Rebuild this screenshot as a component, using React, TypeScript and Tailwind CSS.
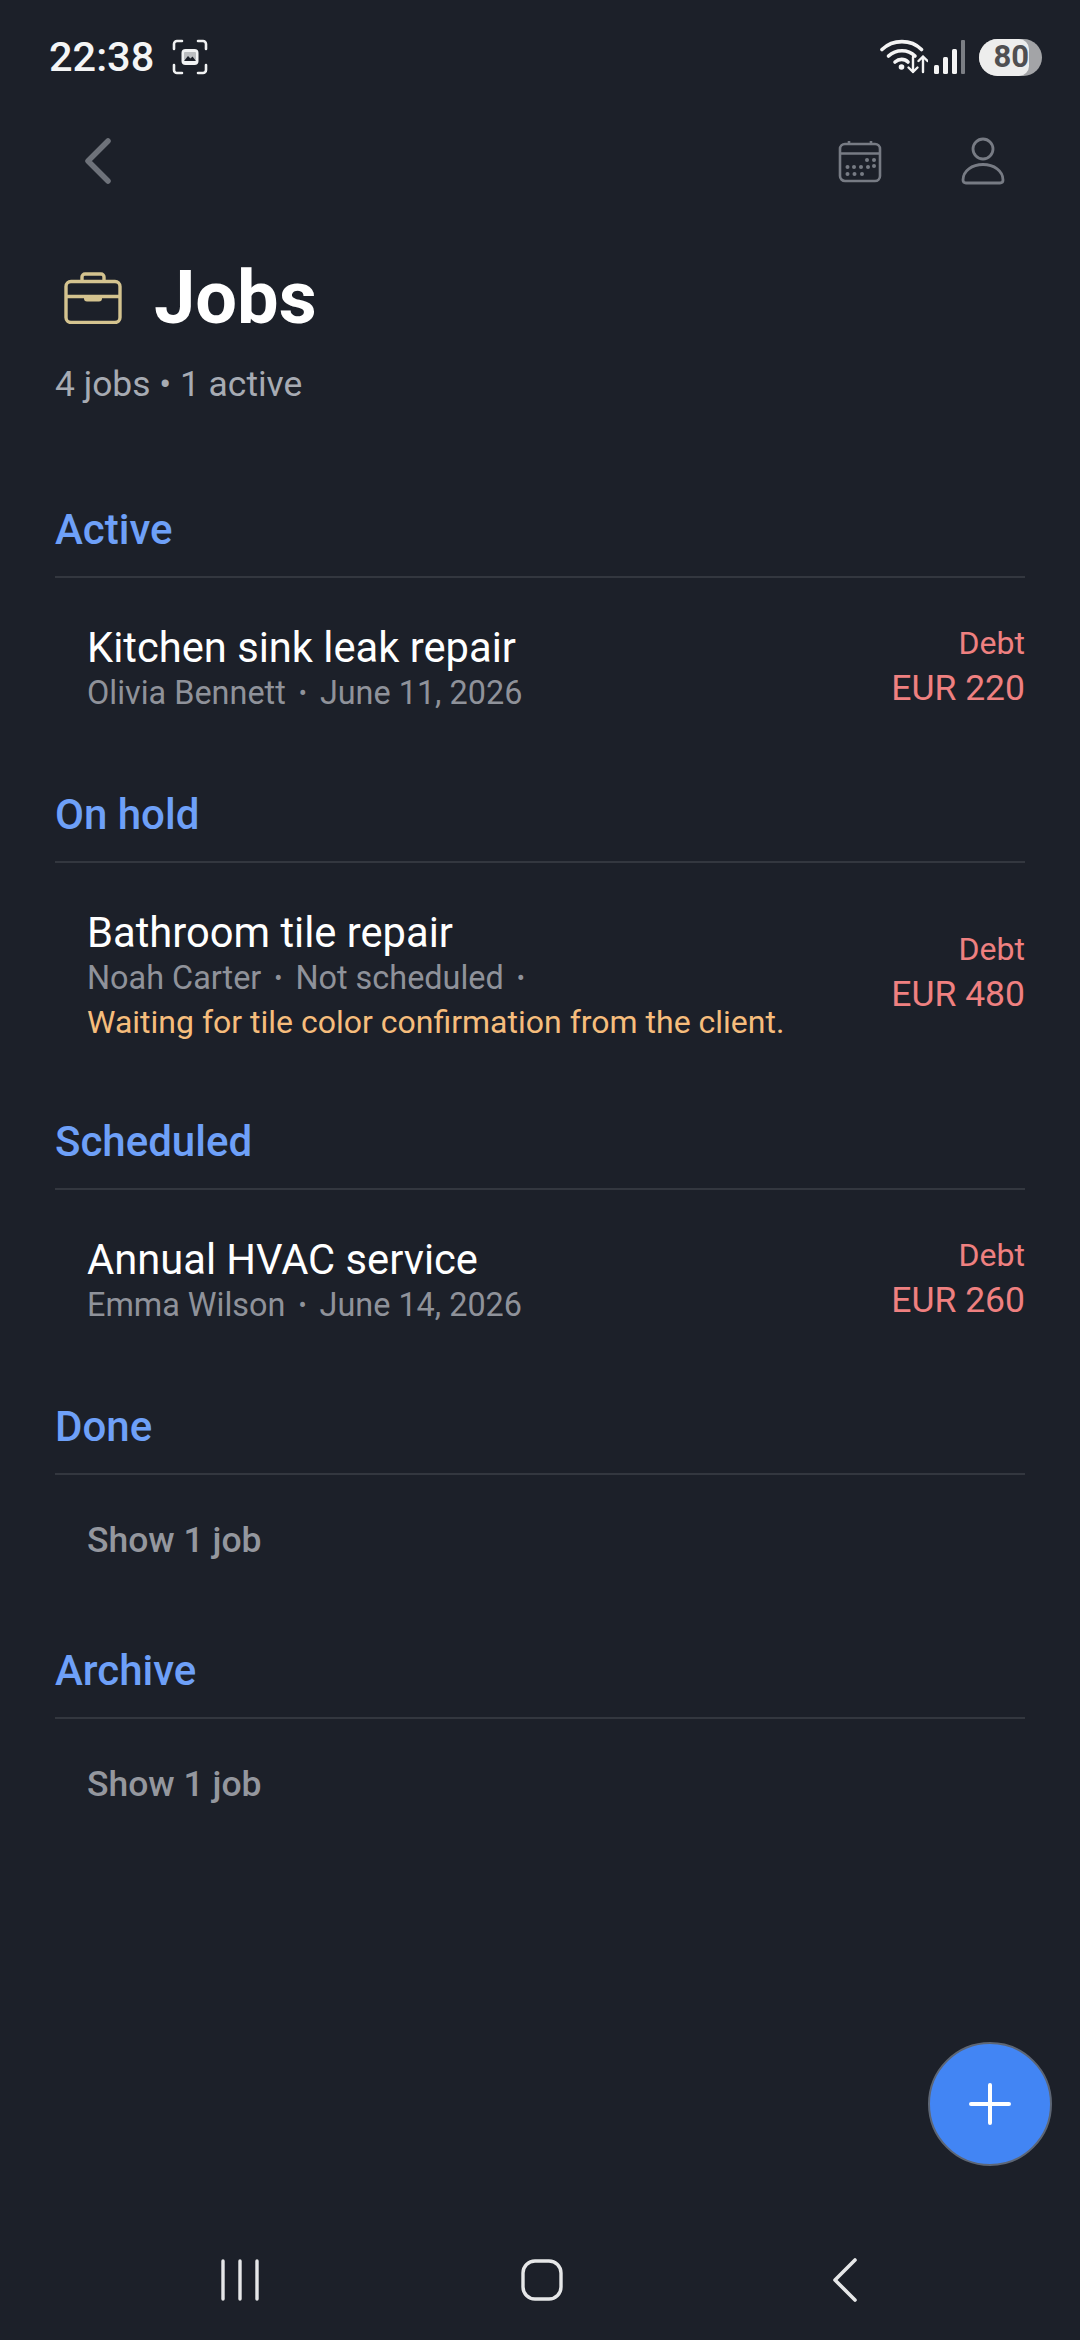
import React from "react";

interface Job {
  title: string;
  meta: string[];
  trailingDot?: boolean;
  note?: string;
  amount: string;
}

interface Section {
  name: string;
  job?: Job;
  collapsed?: string;
}

const sections: Section[] = [
  {
    name: "Active",
    job: {
      title: "Kitchen sink leak repair",
      meta: ["Olivia Bennett", "June 11, 2026"],
      amount: "EUR 220",
    },
  },
  {
    name: "On hold",
    job: {
      title: "Bathroom tile repair",
      meta: ["Noah Carter", "Not scheduled"],
      trailingDot: true,
      note: "Waiting for tile color confirmation from the client.",
      amount: "EUR 480",
    },
  },
  {
    name: "Scheduled",
    job: {
      title: "Annual HVAC service",
      meta: ["Emma Wilson", "June 14, 2026"],
      amount: "EUR 260",
    },
  },
  { name: "Done", collapsed: "Show 1 job" },
  { name: "Archive", collapsed: "Show 1 job" },
];

const ScreenshotIcon = () => (
  <svg width="36" height="36" viewBox="0 0 36 36" fill="none">
    <path
      d="M2 10V5a3 3 0 0 1 3-3h5M26 2h5a3 3 0 0 1 3 3v5M34 26v5a3 3 0 0 1-3 3h-5M10 34H5a3 3 0 0 1-3-3v-5"
      stroke="#f1f2f3"
      strokeWidth="2.6"
      strokeLinecap="round"
    />
    <rect x="9.5" y="10" width="17" height="16" rx="4" fill="#f1f2f3" />
    <rect x="12" y="13" width="12" height="8" rx="1" fill="#1c2029" opacity="0.25" />
    <path d="M12 22l4-5 2.5 2.5 2-2 3.5 4.5z" fill="#1c2029" />
  </svg>
);

const WifiIcon = () => (
  <svg width="48" height="36" viewBox="0 0 48 36" fill="none">
    <path d="M2 10.5C13 0 31 0 41.5 10.5" stroke="#f4f4f4" strokeWidth="3.6" strokeLinecap="round" />
    <path d="M8.5 17C16 10 28 10 35 17" stroke="#f4f4f4" strokeWidth="3.6" strokeLinecap="round" />
    <path d="M15 23C19 19.5 24.5 19.5 28 23" stroke="#f4f4f4" strokeWidth="3.6" strokeLinecap="round" />
    <circle cx="21.5" cy="28" r="2.8" fill="#f4f4f4" />
    <path d="M33 18v15M28.5 28.5l4.5 4.5 4.5-4.5" stroke="#f4f4f4" strokeWidth="2.4" strokeLinecap="round" strokeLinejoin="round" />
    <path d="M43 33V17.5M38.5 22l4.5-4.5 4.5 4.5" stroke="#f4f4f4" strokeWidth="2.4" strokeLinecap="round" strokeLinejoin="round" />
  </svg>
);

const SignalIcon = () => (
  <svg width="32" height="34" viewBox="0 0 32 34" fill="none">
    <rect x="0" y="25" width="5" height="9" rx="1.5" fill="#f4f4f4" />
    <rect x="9" y="17" width="5" height="17" rx="1.5" fill="#f4f4f4" />
    <rect x="18" y="9" width="5" height="25" rx="1.5" fill="#f4f4f4" />
    <rect x="27" y="0" width="4" height="34" rx="1" fill="#7b7e84" />
  </svg>
);

const CalendarIcon = () => (
  <svg width="44" height="44" viewBox="0 0 44 44" fill="none" stroke="#777b84" strokeWidth="2.6">
    <rect x="2" y="5" width="40" height="37" rx="5" />
    <path d="M2 14.5h40M11 2v4M33 2v4" />
    <g fill="#777b84" stroke="none">
      <circle cx="29" cy="21" r="2" />
      <circle cx="36" cy="21" r="2" />
      <circle cx="9.5" cy="28" r="2" />
      <circle cx="16" cy="28" r="2" />
      <circle cx="23" cy="28" r="2" />
      <circle cx="30" cy="28" r="2" />
      <circle cx="36" cy="27" r="2" />
      <circle cx="9.5" cy="35" r="2" />
      <circle cx="16.5" cy="35" r="2" />
      <circle cx="24" cy="35" r="2" />
    </g>
  </svg>
);

const PersonIcon = () => (
  <svg width="44" height="48" viewBox="0 0 44 48" fill="none" stroke="#777b84" strokeWidth="2.8">
    <circle cx="22" cy="12" r="10" />
    <path d="M2 43C2 34 11 27.5 22 27.5S42 34 42 43c0 2-1 3-3 3H5c-2 0-3-1-3-3z" strokeLinejoin="round" />
  </svg>
);

const BriefcaseIcon = () => (
  <svg width="58" height="52" viewBox="0 0 58 52" fill="none" stroke="#d4c38f" strokeWidth="3.4">
    <rect x="2" y="9.5" width="54" height="41" rx="5" />
    <path d="M18 9V5a3 3 0 0 1 3-3h16a3 3 0 0 1 3 3v4" />
    <path d="M2 24.5h54" />
    <path d="M20 24h18v2.5a3 3 0 0 1-3 3H23a3 3 0 0 1-3-3z" fill="#d4c38f" stroke="none" />
  </svg>
);

function JobRow({ job }: { job: Job }) {
  return (
    <div className="flex items-center justify-between pt-[46px] pl-8">
      <div>
        <div className="h-12 text-[41.7px] leading-[48px] text-white">{job.title}</div>
        <div className="-mt-[2px] flex h-[46px] items-center text-[32.4px] text-[#8f929a]">
          {job.meta.map((m, i) => (
            <React.Fragment key={m}>
              {i > 0 && <span className="mx-[13px] text-[24px]">•</span>}
              <span>{m}</span>
            </React.Fragment>
          ))}
          {job.trailingDot && <span className="ml-[13px] text-[24px]">•</span>}
        </div>
        {job.note && (
          <div className="h-[42px] text-[32px] leading-[42px] text-[#f6bd7c]">{job.note}</div>
        )}
      </div>
      <div className="-mt-[9px] flex flex-col items-end text-[#ef8080]">
        <div className="text-[32px] leading-[45px]">Debt</div>
        <div className="text-[35.5px] leading-[44px]">{job.amount}</div>
      </div>
    </div>
  );
}

function JobSection({ section }: { section: Section }) {
  return (
    <section className={section.job ? "mb-[75px]" : "mb-[83px]"}>
      <h2 className="h-12 text-[42px] leading-[48px] font-medium text-[#6ea0f8]">{section.name}</h2>
      <div className="mt-[22px] h-[2px] bg-[#33373f]" />
      {section.job && <JobRow job={section.job} />}
      {section.collapsed && (
        <div className="mt-[41px] pl-8 text-[35.5px] leading-[48px] font-medium text-[#94979e]">
          {section.collapsed}
        </div>
      )}
    </section>
  );
}

export default function App() {
  return (
    <div
      className="relative flex h-[2340px] w-[1080px] flex-col overflow-hidden bg-[#1c2029]"
      style={{ fontFamily: "Roboto, sans-serif" }}
    >
      {/* status bar */}
      <div className="flex h-[114px] items-center justify-between pr-[38px] pl-[49px]">
        <div className="flex items-center gap-[18px]">
          <span className="text-[41.5px] font-medium text-[#f4f5f6]">22:38</span>
          <ScreenshotIcon />
        </div>
        <div className="flex items-center">
          <WifiIcon />
          <span className="ml-[6px]">
            <SignalIcon />
          </span>
          <div className="ml-[13px] flex h-[37px] w-[63px] overflow-hidden rounded-full bg-[#a3a4a7]">
            <div className="flex w-[50px] items-center justify-end rounded-r-[10px] bg-[#ededed] text-[31px] font-bold text-[#4f4f52]">
              80
            </div>
          </div>
        </div>
      </div>

      {/* top actions */}
      <div className="flex h-[94px] items-center justify-between pr-[75px] pl-[85px]">
        <svg width="26" height="46" viewBox="0 0 26 46" fill="none">
          <path d="M23 3L3 23l20 20" stroke="#6e727a" strokeWidth="5.5" strokeLinecap="round" strokeLinejoin="round" />
        </svg>
        <div className="flex items-center gap-[79px]">
          <CalendarIcon />
          <PersonIcon />
        </div>
      </div>

      {/* heading */}
      <div className="mt-[50px] flex items-center pl-[64px]">
        <BriefcaseIcon />
        <h1 className="ml-[32px] text-[74px] leading-[80px] font-bold text-white">Jobs</h1>
      </div>
      <div className="mt-[24px] pl-[55px] text-[35.4px] leading-[44px] text-[#a7abb3]">4 jobs • 1 active</div>

      <main className="mt-[100px] px-[55px]">
        {sections.map((s) => (
          <JobSection key={s.name} section={s} />
        ))}
      </main>

      {/* add button */}
      <button className="absolute top-[2042px] left-[928px] flex h-[124px] w-[124px] items-center justify-center rounded-full border-2 border-[#5d6675] bg-[#4285f4]">
        <svg width="42" height="42" viewBox="0 0 42 42" fill="none">
          <path d="M21 2v38M2 21h38" stroke="#fff" strokeWidth="4" strokeLinecap="round" />
        </svg>
      </button>

      {/* android nav */}
      <div className="mt-auto mb-[39px] flex h-[42px] items-center pl-[220px]">
        <svg width="40" height="42" viewBox="0 0 40 42" fill="none" stroke="#e6e7e8" strokeWidth="3.4" strokeLinecap="round">
          <path d="M3 2v38M20 2v38M37 2v38" />
        </svg>
        <svg className="ml-[261px]" width="42" height="42" viewBox="0 0 42 42" fill="none" stroke="#e6e7e8" strokeWidth="3.4">
          <rect x="2" y="2" width="38" height="38" rx="12" />
        </svg>
        <svg className="ml-[269px]" width="26" height="44" viewBox="0 0 26 44" fill="none" stroke="#e6e7e8" strokeWidth="3.6" strokeLinecap="round" strokeLinejoin="round">
          <path d="M23 2L3 22l20 20" />
        </svg>
      </div>
    </div>
  );
}
